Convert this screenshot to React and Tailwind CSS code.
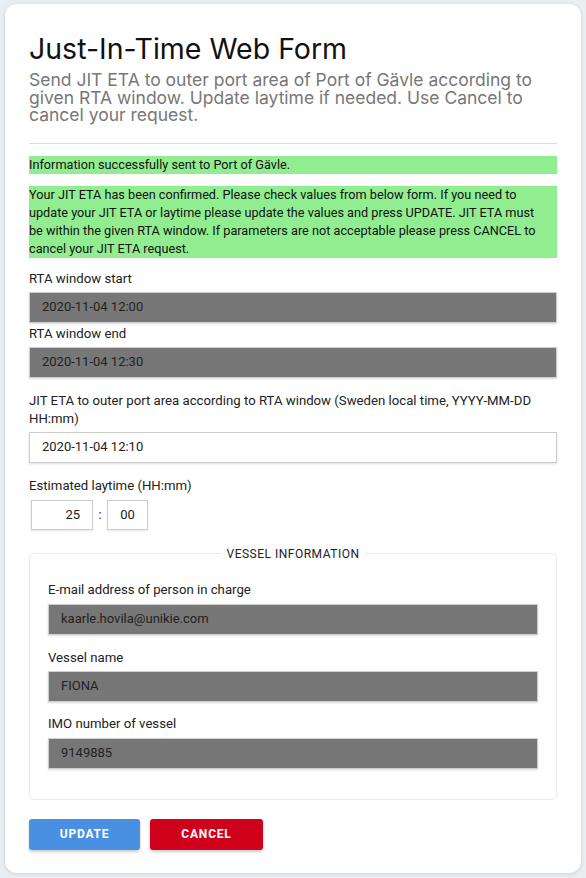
import React from 'react';

const Label = ({ children, className = '' }) => (
  <div className={`text-[13.2px] leading-[18px] text-[#222] ${className}`}>{children}</div>
);

const ReadOnlyInput = ({ value, className = '' }) => (
  <div className={`h-[31px] bg-[#777777] border border-[#cfcfcf] shadow-[0_1px_2px_rgba(0,0,0,0.15)] flex items-center pl-[12px] text-[13px] text-[#222] ${className}`}>
    {value}
  </div>
);

const App = () => (
  <div className="min-h-[878px] bg-[#e9eef2] pt-[4px] pb-[5px] px-[5px] font-[Roboto]">
    <div className="bg-white rounded-[12px] shadow-[0_1px_4px_rgba(0,0,0,0.12)] px-[24px] pt-[28px] pb-[23px]">
      <h1 className="font-[Inter] text-[28.5px] leading-[34px] text-[#111] font-normal">Just-In-Time Web Form</h1>
      <p className="mt-[5px] font-[Inter] text-[17.5px] leading-[17.5px] text-[#777]">
        Send JIT ETA to outer port area of Port of Gävle according to given RTA window. Update laytime if needed. Use Cancel to cancel your request.
      </p>
      <hr className="mt-[19px] border-t border-[#ddd]" />

      <div className="mt-[12px] bg-[#90ee90] text-[12.7px] leading-[18px] text-[#111]">Information successfully sent to Port of Gävle.</div>
      <div className="mt-[12px] bg-[#90ee90] text-[12.7px] leading-[18px] text-[#111]">
        Your JIT ETA has been confirmed. Please check values from below form. If you need to update your JIT ETA or laytime please update the values and press UPDATE. JIT ETA must<br />
        be within the given RTA window. If parameters are not acceptable please press CANCEL to cancel your JIT ETA request.
      </div>

      <Label className="mt-[12px]">RTA window start</Label>
      <ReadOnlyInput className="mt-[4px]" value="2020-11-04 12:00" />
      <Label className="mt-[2px]">RTA window end</Label>
      <ReadOnlyInput className="mt-[4px]" value="2020-11-04 12:30" />

      <Label className="mt-[14px]">JIT ETA to outer port area according to RTA window (Sweden local time, YYYY-MM-DD HH:mm)</Label>
      <div className="mt-[4px] h-[31px] bg-white border border-[#ccc] shadow-[0_1px_2px_rgba(0,0,0,0.12)] flex items-center pl-[12px] text-[13px] text-[#222]">
        2020-11-04 12:10
      </div>

      <Label className="mt-[14px]">Estimated laytime (HH:mm)</Label>
      <div className="mt-[5px] flex items-center">
        <div className="ml-[2px] w-[62px] h-[30px] border border-[#ccc] shadow-[0_1px_2px_rgba(0,0,0,0.1)] flex items-center justify-end pr-[12px] text-[13px] text-[#222]">25</div>
        <div className="w-[14px] text-center text-[13px] text-[#222]">:</div>
        <div className="w-[41px] h-[30px] border border-[#ccc] shadow-[0_1px_2px_rgba(0,0,0,0.1)] flex items-center justify-center text-[13px] text-[#222]">00</div>
      </div>

      <fieldset className="mt-[17px] border border-[#eaeaea] rounded-[5px] px-[18px] pt-[20px] pb-[30px]">
        <legend className="mx-auto px-[6px] text-[12px] leading-[14px] tracking-[0.5px] text-[#222]">VESSEL INFORMATION</legend>
        <Label>E-mail address of person in charge</Label>
        <ReadOnlyInput className="mt-[5px]" value="kaarle.hovila@unikie.com" />
        <Label className="mt-[14px]">Vessel name</Label>
        <ReadOnlyInput className="mt-[4px]" value="FIONA" />
        <Label className="mt-[13px]">IMO number of vessel</Label>
        <ReadOnlyInput className="mt-[5px]" value="9149885" />
      </fieldset>

      <div className="mt-[19px] flex gap-[10px]">
        <button className="w-[111px] h-[31px] rounded-[3px] bg-[#4a90e2] text-white text-[12px] font-bold tracking-[0.8px] shadow-[0_2px_3px_rgba(0,0,0,0.2)]">UPDATE</button>
        <button className="w-[113px] h-[31px] rounded-[3px] bg-[#d0021b] text-white text-[12px] font-bold tracking-[0.8px] shadow-[0_2px_3px_rgba(0,0,0,0.2)]">CANCEL</button>
      </div>
    </div>
  </div>
);

export default App;
